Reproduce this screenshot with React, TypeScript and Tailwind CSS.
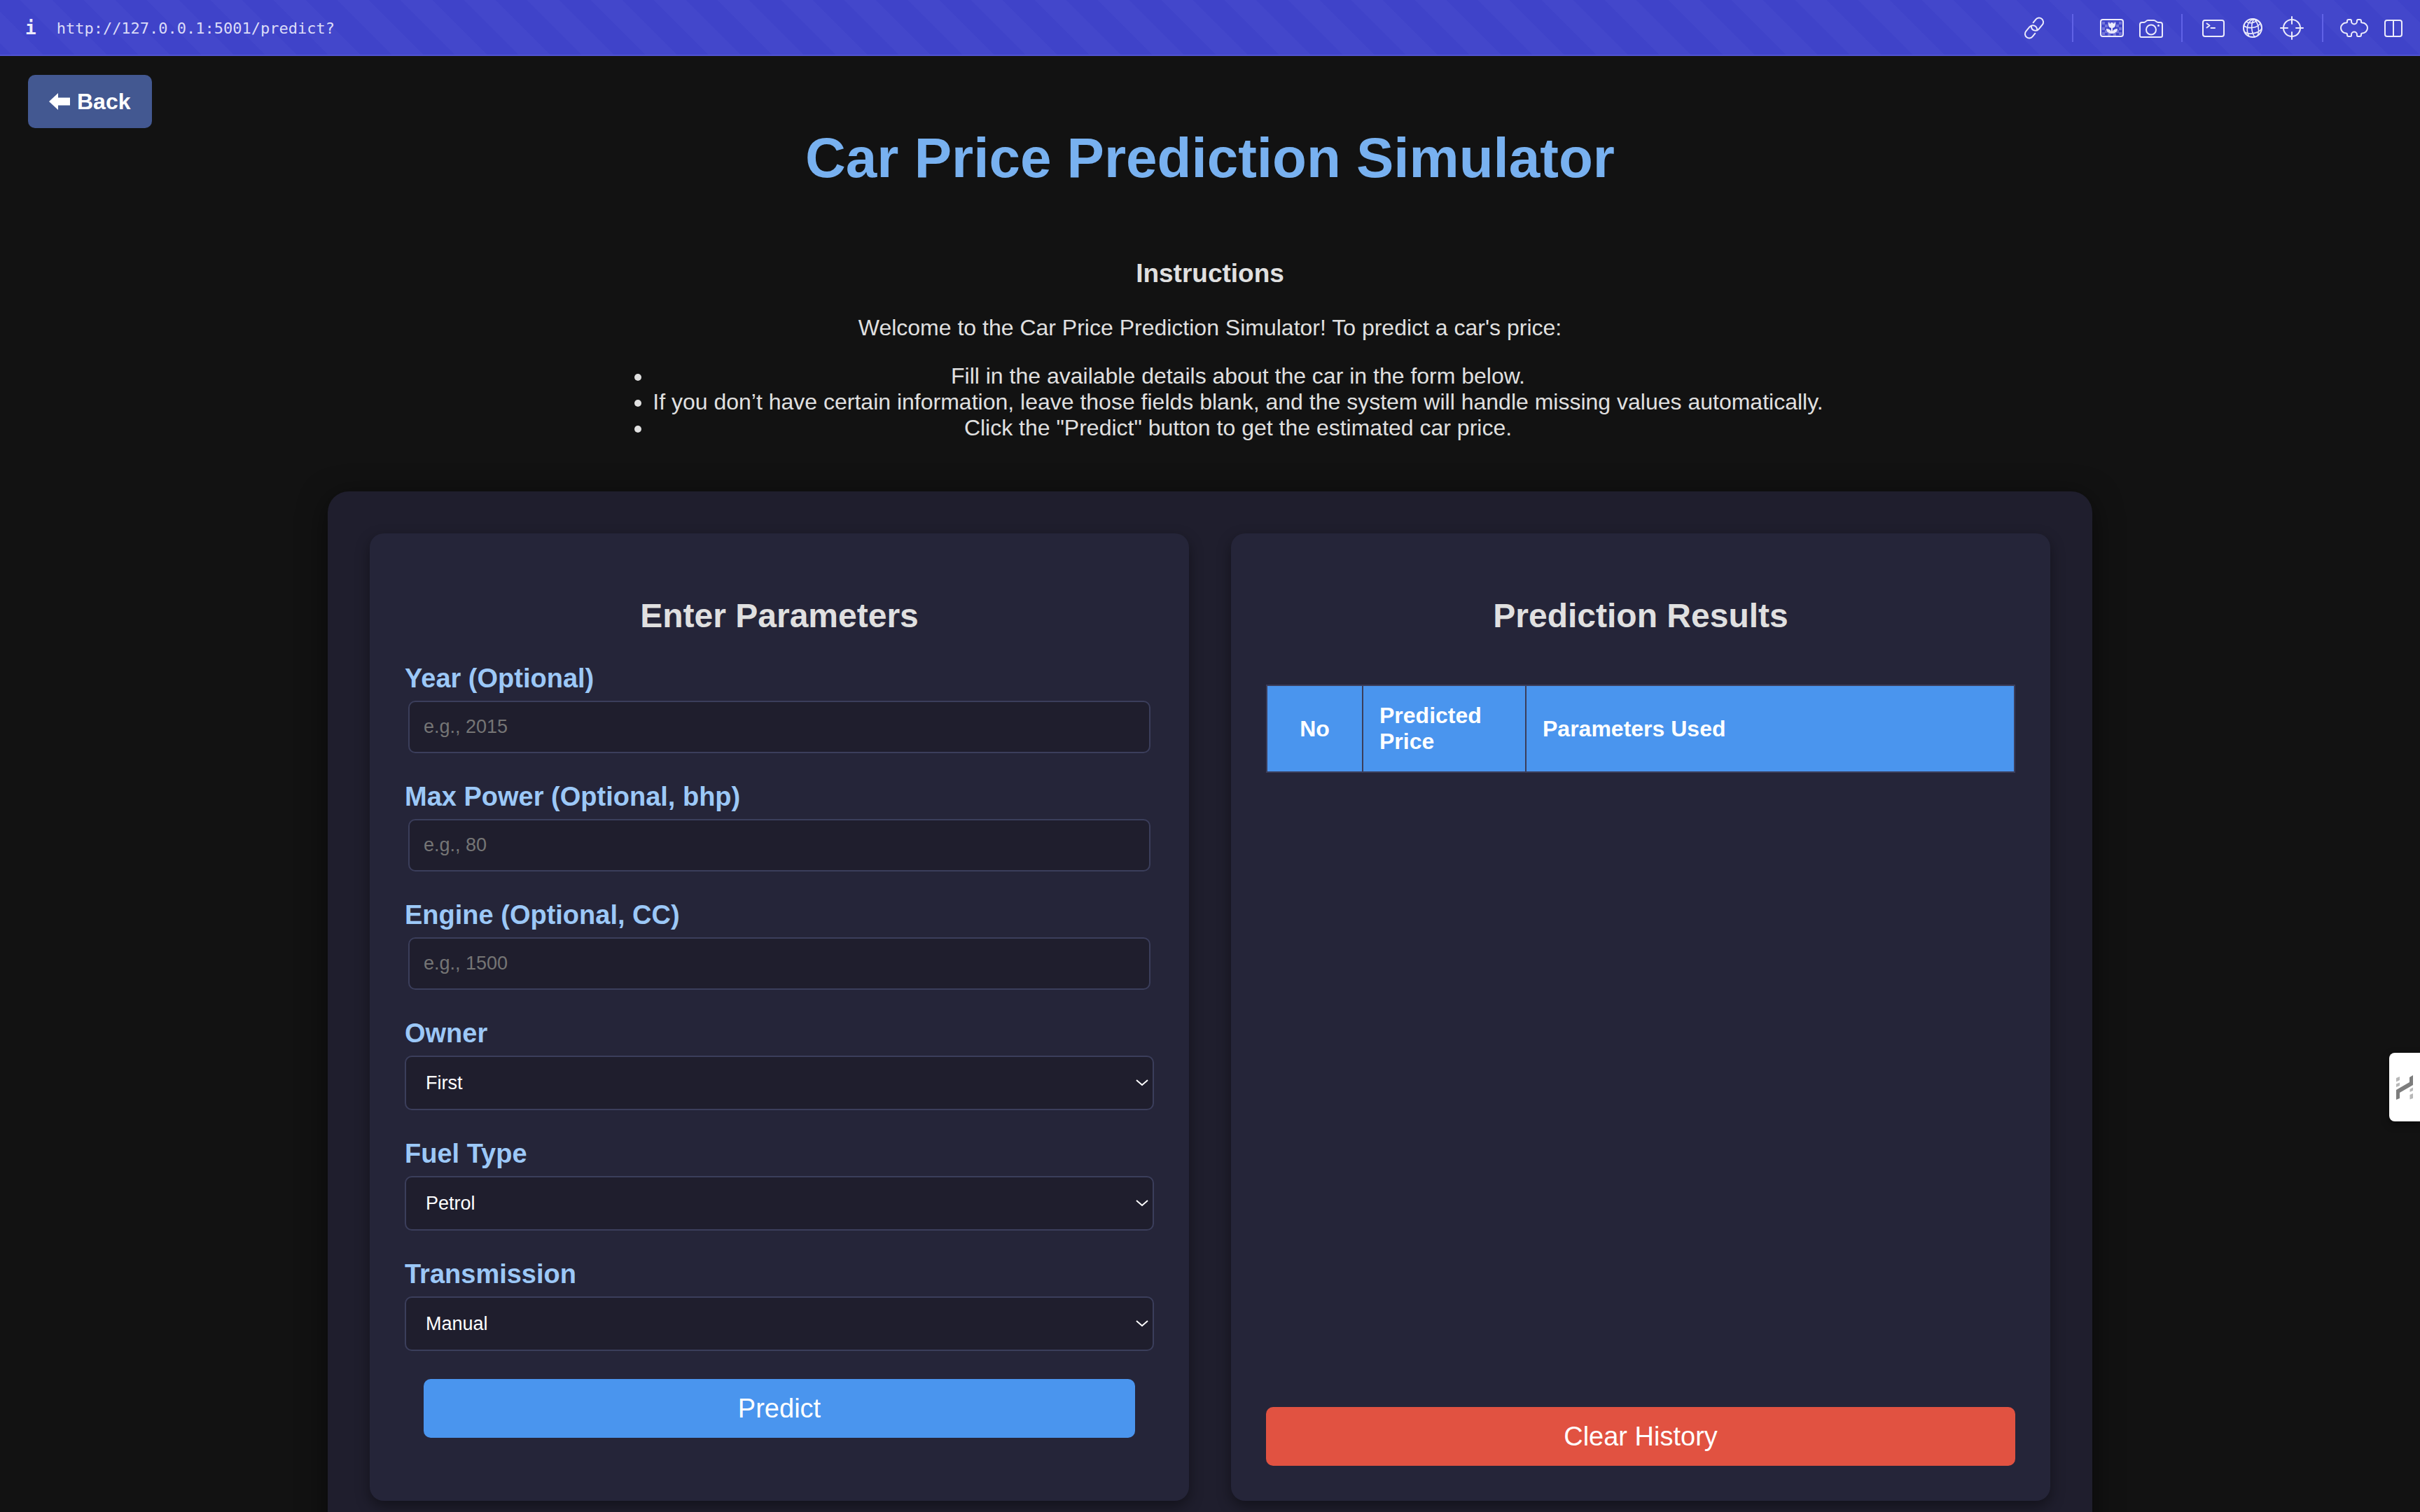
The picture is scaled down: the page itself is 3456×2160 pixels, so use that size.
import type { ReactNode } from "react";

function Icon({ children }: { children: ReactNode }) {
  return (
    <svg
      className="size-10"
      viewBox="0 0 40 40"
      fill="none"
      stroke="currentColor"
      strokeWidth={2}
      strokeLinecap="round"
      strokeLinejoin="round"
      aria-hidden="true"
    >
      {children}
    </svg>
  );
}

function ToolButton({ label, children }: { label: string; children: ReactNode }) {
  return (
    <button type="button" aria-label={label} className="shrink-0">
      <Icon>{children}</Icon>
    </button>
  );
}

function Divider() {
  return <span className="mr-2 ml-[7px] h-10 w-[2px] bg-[#6062e6]" />;
}

const checker = [
  [7, 11], [15, 11], [23, 11], [31, 11],
  [11, 15], [27, 15],
  [7, 19], [31, 19],
  [11, 23], [27, 23],
  [7, 26], [15, 27], [23, 27], [31, 26],
];

function BrowserBar() {
  return (
    <header className="flex h-20 shrink-0 items-center bg-[repeating-linear-gradient(45deg,#3f43c9_0px,#3f43c9_13px,#4347cb_13px,#4347cb_45px,#3f43c9_45px,#3f43c9_64px)] pr-[18px] pl-9 text-[#ecebfb] shadow-[inset_0_-2px_0_#5053d2]">
      <span className="font-['DejaVu_Sans_Mono',monospace] text-[26px] leading-10 font-bold">i</span>
      <span className="ml-[29px] pt-[2px] font-['DejaVu_Sans_Mono',monospace] text-[22px] leading-10 text-[#dcdcf8]">
        http://127.0.0.1:5001/predict?
      </span>
      <nav aria-label="Developer tools" className="ml-auto flex items-center gap-4">
        <ToolButton label="Copy link">
          <g transform="rotate(-50 20 20)">
            <path d="M15 26H9A6 6 0 0 1 9 14H17A6 6 0 0 1 21 24.5" />
            <path d="M25 14H31A6 6 0 0 1 31 26H23A6 6 0 0 1 19 15.5" />
          </g>
        </ToolButton>
        <span className="mr-[19px] ml-[18px] h-10 w-[2px] bg-[#6062e6]" />
        <ToolButton label="Images">
          <rect x="4" y="8" width="32" height="24" rx="3" />
          <g stroke="none" fill="currentColor">
            {checker.map(([x, y]) => (
              <rect key={`${x}-${y}`} x={x - 1} y={y} width="4" height="4" opacity="0.3" />
            ))}
            <path d="M15 12L17.5 14L20 11.500L22.500 14L25 12V15.500C25 18 23.500 19.500 21 20V25C22 22 25 21 28 21C28 25 25 28 20 28C15 28 12 25 12 21C15 21 18 22 19 25V20C16.500 19.500 15 18 15 15.500Z" />
          </g>
        </ToolButton>
        <ToolButton label="Screenshot">
          <path d="M4 15C4 13 5 12 7 12H10C12 12 13 9 15.500 9H24C26.500 9 27.500 12 30 12H33C35 12 36 13 36 15V31C36 32.500 35.500 33 34 33H6C4.500 33 4 32.500 4 31Z" />
          <circle cx="20" cy="22.500" r="7" />
          <circle cx="30.500" cy="16.500" r="1.500" fill="currentColor" stroke="none" />
        </ToolButton>
        <Divider />
        <ToolButton label="Console">
          <rect x="5" y="9" width="30" height="23" rx="3" />
          <path d="M10.500 13.500L14.500 16.500L10.500 19.500M16.500 20H22" />
        </ToolButton>
        <ToolButton label="Network">
          <circle cx="20" cy="20" r="13" />
          <path d="M22 7C12 10 10 22 14.500 31M22 7C17 14 18 26 23 33M22 7C28 13 30 22 27.500 30M24 8C29 10 32 14 32.500 18M7.500 17C13 21 27 21 31 13M9 26C15 30 28 28 33 21M11 11C14 14 23 13 26 9" strokeWidth={1.6} />
        </ToolButton>
        <ToolButton label="Inspect element">
          <circle cx="20" cy="20" r="12" />
          <path d="M20 4V14M20 26V36M4 20H14M26 20H36" />
        </ToolButton>
        <Divider />
        <ToolButton label="Extensions">
          <path d="M12 8H14.500Q16 8 16 9.500V10.500A4 4 0 0 0 24 10.500V9.500Q24 8 25.500 8H28Q30 8 30 10V11Q30 12.500 31.500 12.500A7.500 7.500 0 0 1 31.500 27.500Q30 27.500 30 29V30Q30 32 28 32H25.500Q24 32 24 30.500V29.500A4 4 0 0 0 16 29.500V30.500Q16 32 14.500 32H12Q10 32 10 30V29Q10 27.500 8.500 27.500A7.500 7.500 0 0 1 8.500 12.500Q10 12.500 10 11V10Q10 8 12 8Z" />
        </ToolButton>
        <ToolButton label="Split view">
          <rect x="8" y="9" width="24" height="23" rx="3" />
          <path d="M20 9V32" />
        </ToolButton>
      </nav>
    </header>
  );
}

const labelClass = "block text-[38px] leading-[44px] font-bold text-[#9cc8f7]";

function TextField({ id, label, placeholder }: { id: string; label: string; placeholder: string }) {
  return (
    <div>
      <label htmlFor={id} className={labelClass}>
        {label}
      </label>
      <div className="mt-[10px] px-[5px]">
        <input
          id={id}
          type="text"
          placeholder={placeholder}
          className="block h-[75px] w-full rounded-[10px] border-2 border-[#3b3e5b] bg-[#1f1e2d] px-5 text-[27px] text-white placeholder:text-[#757575]"
        />
      </div>
    </div>
  );
}

function SelectField({ id, label, options }: { id: string; label: string; options: string[] }) {
  return (
    <div>
      <label htmlFor={id} className={labelClass}>
        {label}
      </label>
      <div className="relative mt-[10px]">
        <select
          id={id}
          className="block h-[78px] w-full appearance-none rounded-[10px] border-2 border-[#3b3e5b] bg-[#1f1e2d] px-7 text-[27px] text-white"
        >
          {options.map((o) => (
            <option key={o}>{o}</option>
          ))}
        </select>
        <svg
          className="pointer-events-none absolute inset-y-0 right-[7px] my-auto h-3 w-5"
          viewBox="0 0 20 12"
          fill="none"
          stroke="#ffffff"
          strokeWidth={2}
          aria-hidden="true"
        >
          <path d="M2 2L10 9L18 2" />
        </svg>
      </div>
    </div>
  );
}

const cardClass =
  "flex flex-col rounded-[20px] bg-[#252539] p-[50px] shadow-[0_8px_20px_rgba(0,0,0,0.4)]";
const cardTitleClass = "my-10 text-center text-[48px] leading-[55px] font-bold";
const buttonClass = "h-[84px] rounded-[10px] text-[38px] leading-[44px] text-white";
const headCell = "border-2 border-[#3b3e5b] px-[23px] py-6";

export default function App() {
  return (
    <div className="flex h-screen flex-col overflow-hidden bg-[#121212] font-['Liberation_Sans',Arial,sans-serif] text-[32px] leading-[37px] text-[#e0e0e0]">
      <BrowserBar />
      <main className="relative grow overflow-y-auto [scrollbar-width:none]">
        <button
          type="button"
          className="absolute top-[27px] left-10 flex h-[76px] items-center gap-2 rounded-[10px] bg-[#435891] px-[30px] font-bold text-white"
        >
          <svg className="h-6 w-8" viewBox="0 0 32 24" fill="currentColor" aria-hidden="true">
            <path d="M0 12L13 0V6.500H30V17.500H13V24Z" />
          </svg>
          Back
        </button>

        <h1 className="pt-[100px] text-center text-[80px] leading-[92px] font-bold text-[#78b1f0]">
          Car Price Prediction Simulator
        </h1>

        <section className="mt-[98px] flex flex-col items-center text-center">
          <h2 className="text-[37px] leading-[42px] font-bold">Instructions</h2>
          <p className="mt-[38px]">
            Welcome to the Car Price Prediction Simulator! To predict a car's price:
          </p>
          <ul className="mt-8 list-disc pl-20">
            <li>Fill in the available details about the car in the form below.</li>
            <li>
              If you don’t have certain information, leave those fields blank, and the system will
              handle missing values automatically.
            </li>
            <li>Click the "Predict" button to get the estimated car price.</li>
          </ul>
        </section>

        <div className="mx-auto mt-[72px] grid w-full max-w-[2520px] grid-cols-2 gap-[60px] rounded-[30px] bg-[#1f1e2d] p-[60px] shadow-[0_8px_40px_rgba(0,0,0,0.5)]">
          <section className={cardClass}>
            <h2 className={cardTitleClass}>Enter Parameters</h2>
            <form className="flex flex-col gap-10" onSubmit={(e) => e.preventDefault()}>
              <TextField id="year" label="Year (Optional)" placeholder="e.g., 2015" />
              <TextField id="power" label="Max Power (Optional, bhp)" placeholder="e.g., 80" />
              <TextField id="engine" label="Engine (Optional, CC)" placeholder="e.g., 1500" />
              <SelectField id="owner" label="Owner" options={["First", "Second", "Third"]} />
              <SelectField id="fuel" label="Fuel Type" options={["Petrol", "Diesel"]} />
              <SelectField
                id="transmission"
                label="Transmission"
                options={["Manual", "Automatic"]}
              />
              <button type="submit" className={`${buttonClass} mx-[27px] mb-10 bg-[#4a95ee]`}>
                Predict
              </button>
            </form>
          </section>

          <section className={cardClass}>
            <h2 className={cardTitleClass}>Prediction Results</h2>
            <table className="mt-[31px] w-full table-fixed border-collapse bg-[#4a95ee] text-left text-white">
              <thead>
                <tr>
                  <th className={`${headCell} w-[137px] text-center`}>No</th>
                  <th className={`${headCell} w-[233px]`}>Predicted Price</th>
                  <th className={headCell}>Parameters Used</th>
                </tr>
              </thead>
            </table>
            <button type="button" className={`${buttonClass} mt-auto bg-[#e15241]`}>
              Clear History
            </button>
          </section>
        </div>
      </main>

      <button
        type="button"
        aria-label="Open side widget"
        className="fixed top-[1504px] right-0 flex h-[98px] w-11 items-center justify-center rounded-l-lg bg-white shadow-[0_4px_12px_rgba(0,0,0,0.4)]"
      >
        <svg className="h-[35px] w-6" viewBox="0 0 24 35" aria-hidden="true">
          <path d="M0 35V21L19 10V3L24 0V14L5 25V33Z" fill="#7d7d7d" />
          <path
            d="M0 4L5 2V7L0 9.500ZM0 12.500L5 10.500V15L0 17ZM19.500 20L24 17.500V22L19.500 24ZM19.500 28L24 26V33L19.500 34.500Z"
            fill="#b8b8b8"
          />
        </svg>
      </button>
    </div>
  );
}
